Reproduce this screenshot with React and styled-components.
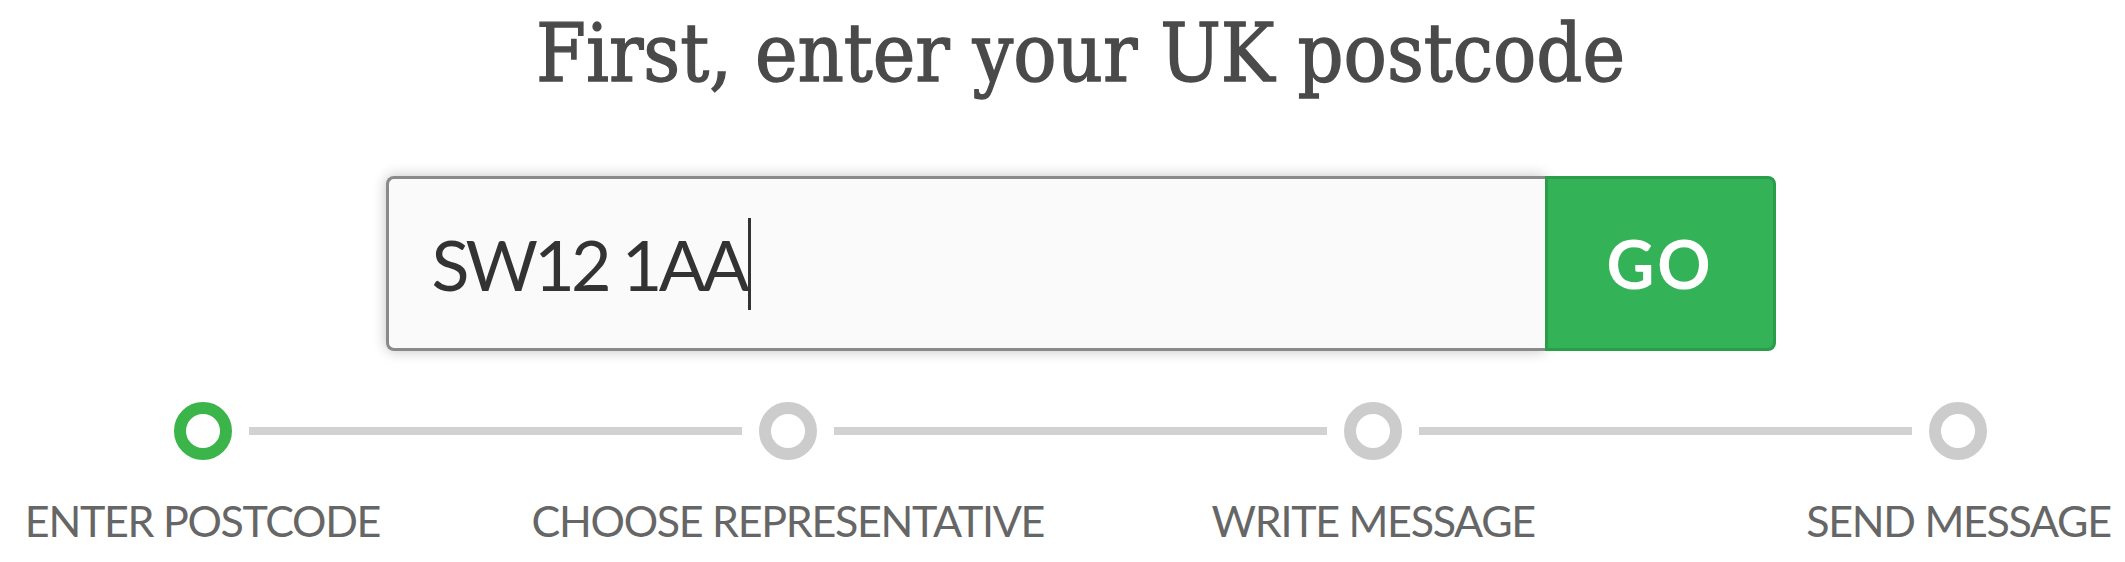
import React from "react";
import styled, { createGlobalStyle } from "styled-components";

const GlobalStyle = createGlobalStyle`
  html, body {
    margin: 0;
    padding: 0;
    background: #ffffff;
  }
  body {
    font-family: Lato, "Noto Sans", sans-serif;
  }
`;

const Page = styled.div`
  width: 2125px;
  height: 562px;
  box-sizing: border-box;
  padding: 0 0 0 36px;
  display: flex;
  flex-direction: column;
  align-items: center;
  overflow: hidden;
`;

const Heading = styled.h1`
  margin: 0;
  padding-top: 8px;
  font-family: "DejaVu Serif", "Liberation Serif", serif;
  font-stretch: semi-condensed;
  font-weight: 400;
  font-size: 80px;
  line-height: 92px;
  color: #4a4a4a;
  -webkit-text-stroke: 1.3px #4a4a4a;
`;

const Form = styled.form`
  display: flex;
  margin-top: 76px;
  width: 1390px;
  height: 175px;
`;

const InputBox = styled.div`
  flex: 1;
  display: flex;
  align-items: center;
  box-sizing: border-box;
  padding-left: 43px;
  background: #fafafa;
  border: 3px solid #8a8a8a;
  border-right: none;
  border-radius: 8px 0 0 8px;
  box-shadow: 0 0 14px rgba(0, 0, 0, 0.24);
  font-family: Lato, "Noto Sans", sans-serif;
  font-size: 70px;
  letter-spacing: -3.8px;
  color: #333333;
`;

const Caret = styled.span`
  display: inline-block;
  width: 3px;
  height: 92px;
  margin-left: 2px;
  background: #333333;
`;

const GoButton = styled.button`
  width: 231px;
  box-sizing: border-box;
  background: #33b257;
  border: 3px solid #2b9c4a;
  border-radius: 0 8px 8px 0;
  color: #ffffff;
  font-family: Lato, "Noto Sans", sans-serif;
  font-weight: 700;
  font-size: 66px;
  letter-spacing: 3px;
  cursor: pointer;
`;

const Stepper = styled.ol`
  list-style: none;
  margin: 51px 0 0;
  padding: 0;
  width: 1814px;
  display: flex;
`;

const Step = styled.li`
  width: 58px;
  display: flex;
  flex-direction: column;
  align-items: center;
`;

const Dot = styled.span`
  width: 58px;
  height: 58px;
  box-sizing: border-box;
  border-radius: 50%;
  border: 12px solid ${(p) => (p.$active ? "#3bb54a" : "#cccccc")};
  background: #ffffff;
`;

const Label = styled.span`
  margin-top: 37px;
  white-space: nowrap;
  font-family: Lato, "Noto Sans", sans-serif;
  font-size: 43px;
  letter-spacing: -1.3px;
  line-height: 48px;
  color: #666666;
`;

const Connector = styled.li`
  flex: 1;
  height: 8px;
  margin: 25px 17px 0;
  background: #d2d2d2;
`;

const steps = [
  "ENTER POSTCODE",
  "CHOOSE REPRESENTATIVE",
  "WRITE MESSAGE",
  "SEND MESSAGE",
];

export default function App() {
  return (
    <>
      <GlobalStyle />
      <Page>
        <Heading>First, enter your UK postcode</Heading>
        <Form onSubmit={(e) => e.preventDefault()}>
          <InputBox>
            SW12 1AA
            <Caret />
          </InputBox>
          <GoButton type="submit">GO</GoButton>
        </Form>
        <Stepper>
          {steps.map((name, i) => (
            <React.Fragment key={name}>
              {i > 0 && <Connector aria-hidden="true" />}
              <Step>
                <Dot $active={i === 0} />
                <Label>{name}</Label>
              </Step>
            </React.Fragment>
          ))}
        </Stepper>
      </Page>
    </>
  );
}
